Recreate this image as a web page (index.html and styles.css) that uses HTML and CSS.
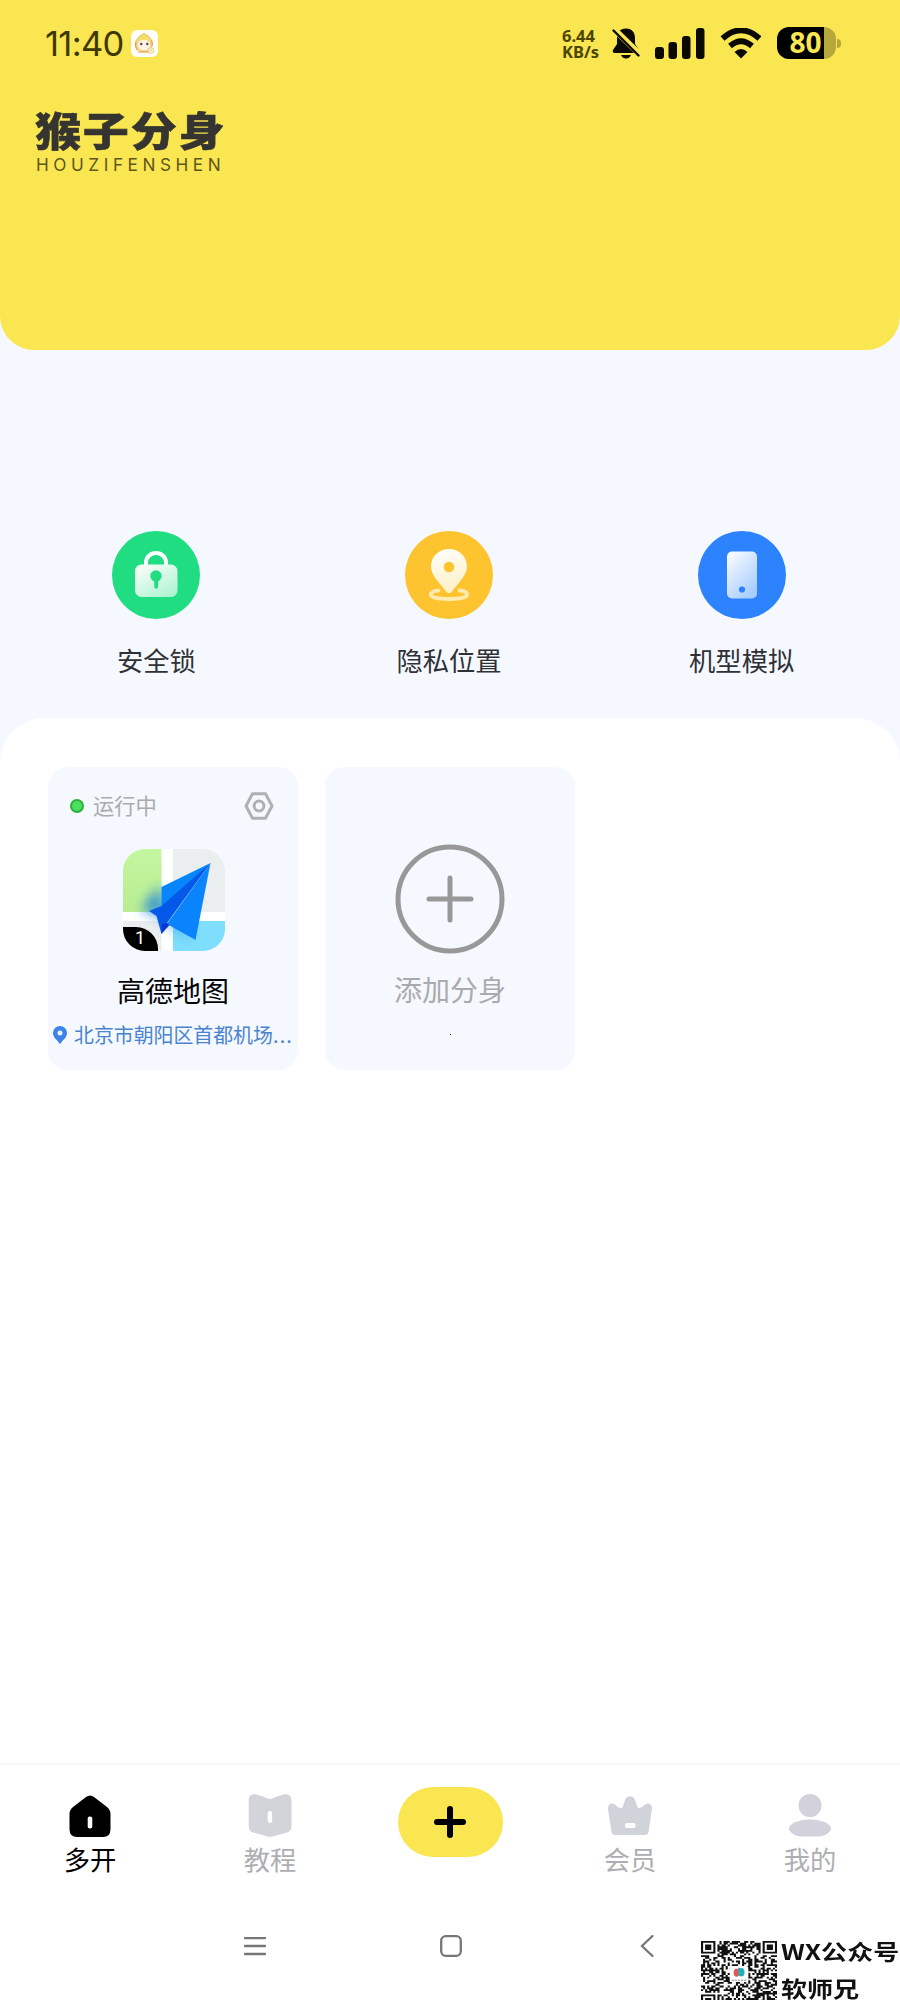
FILE: index.html
```html
<!DOCTYPE html>
<html lang="zh-CN">
<head>
<meta charset="utf-8">
<title>猴子分身</title>
<link rel="stylesheet" href="styles.css">
</head>
<body>
<div class="screen">
  <header class="hero">
    <div class="status">
      <span class="time">11:40</span>
      <svg class="avatar" viewBox="0 0 27 27" width="27" height="27">
        <rect width="27" height="27" rx="6" fill="#fffefa"/>
        <circle cx="13" cy="14" r="8.6" fill="#f7d283"/>
        <path d="M5 11Q8 5 13 3.500Q18 5 21 11" fill="#f2df70" stroke="#e9b953" stroke-width=".8"/>
        <ellipse cx="13" cy="15" rx="6.300" ry="5.200" fill="#fff3e9"/>
        <path d="M5 11.500Q3.500 16 6.500 20.500M20.500 10.500Q22 13 21 16M7 22H18" fill="none" stroke="#e59a4b" stroke-width="1.200"/>
        <circle cx="10.300" cy="14" r="1.200" fill="#4c433e"/><circle cx="16.300" cy="14" r="1.200" fill="#4c433e"/>
        <circle cx="20" cy="20.500" r="2.800" fill="#fff9e0" stroke="#e3bd62" stroke-width=".8"/>
        <circle cx="20" cy="20" r=".6" fill="#a65"/>
      </svg>
      <div class="speed"><span>6.44</span><span>KB/s</span></div>
      <svg class="bell" viewBox="0 0 28 31" width="28" height="31">
        <path d="M14 .5C7.500.5 5 5 5 10V16L1 22Q0 25 3 25H25Q28 25 27 22L23 16V10C23 5 20.500.5 14 .5ZM9 27H19Q17.500 30.500 14 30.500T9 27Z" fill="#0a0900"/>
        <path d="M2 1L27.500 26" stroke="#fae650" stroke-width="6"/>
        <path d="M1.500 2.500L26.500 27.500" stroke="#0a0900" stroke-width="2.400" stroke-linecap="round"/>
      </svg>
      <svg class="signal" viewBox="0 0 50 31" width="50" height="31" fill="#0a0900">
        <rect x="0" y="19" width="9" height="12" rx="3"/><rect x="13.500" y="14" width="8.500" height="17" rx="3"/><rect x="27" y="8" width="8.500" height="23" rx="3"/><rect x="41" y="0" width="8.500" height="31" rx="3"/>
      </svg>
      <svg class="wifi" viewBox="0 0 42 31" width="42" height="31">
        <path d="M2.500 10.500Q21-6 39.500 10.500M10 18Q21 8.500 32 18" fill="none" stroke="#0a0900" stroke-width="5.800"/>
        <path d="M14.500 24Q21 18 27.500 24L21 30.500Z" fill="#0a0900"/>
      </svg>
      <div class="battery"><span>80</span></div>
      <i class="battery-tip"></i>
    </div>
    <div class="brand">
      <div class="brand-cn">猴子分身</div>
      <div class="brand-en">HOUZIFENSHEN</div>
    </div>
  </header>

  <section class="features">
    <div class="feature">
      <svg viewBox="0 0 88 88" width="88" height="88">
        <defs><linearGradient id="lockFill" x1="0" y1="0" x2=".7" y2="1"><stop offset="0" stop-color="#fff"/><stop offset="1" stop-color="#b2f3d2"/></linearGradient></defs>
        <circle cx="44" cy="44" r="44" fill="#21dd82"/>
        <path d="M34 36V31.500a10 9.500 0 0 1 20 0V36" fill="none" stroke="#fbfffd" stroke-width="4"/>
        <rect x="23" y="33.500" width="42.500" height="32.500" rx="6.500" fill="url(#lockFill)"/>
        <circle cx="44" cy="45" r="5.700" fill="#21dd82"/>
        <path d="M42 47h4.500l-.5 9a1.800 1.800 0 0 1-3.600 0Z" fill="#21dd82"/>
      </svg>
      <span>安全锁</span>
    </div>
    <div class="feature">
      <svg viewBox="0 0 88 88" width="88" height="88">
        <defs><linearGradient id="pinFill" x1="0" y1="0" x2=".3" y2="1"><stop offset="0" stop-color="#fff"/><stop offset="1" stop-color="#fff1c8"/></linearGradient></defs>
        <circle cx="44" cy="44" r="44" fill="#fdc42f"/>
        <path d="M33.500 59.500C28 60 25.800 61.500 25.800 63.500C25.800 66.500 33 68 44 68S62.200 66.500 62.200 63.500C62.200 61.500 60 60 54.500 59.500" fill="none" stroke="#ffebaf" stroke-width="3.800" stroke-linecap="round"/>
        <path d="M44 18C34 18 26 25.500 26 35.500C26 44 34 51 41 60.500Q44 64 47 60.500C54 51 62 44 62 35.500C62 25.500 54 18 44 18Z" fill="url(#pinFill)"/>
        <circle cx="44" cy="36" r="5.300" fill="#fdc42f"/>
      </svg>
      <span>隐私位置</span>
    </div>
    <div class="feature">
      <svg viewBox="0 0 88 88" width="88" height="88">
        <defs><linearGradient id="phoneFill" x1="0" y1="0" x2=".7" y2="1"><stop offset="0" stop-color="#fff"/><stop offset="1" stop-color="#a8ccff"/></linearGradient></defs>
        <circle cx="44" cy="44" r="44" fill="#2d82fe"/>
        <rect x="29" y="20.500" width="30" height="47" rx="5" fill="url(#phoneFill)"/>
        <circle cx="44" cy="58.500" r="3.100" fill="#2d82fe"/>
      </svg>
      <span>机型模拟</span>
    </div>
  </section>

  <main class="panel">
    <article class="card">
      <div class="card-head">
        <i class="dot"></i><span class="state">运行中</span>
        <svg viewBox="0 0 30 28" width="30" height="28" fill="none" stroke="#aeb0b4">
          <path d="M8.500 1.800H21.500L28 14L21.500 26.200H8.500L2 14Z" stroke-width="3" stroke-linejoin="round"/>
          <circle cx="15" cy="14" r="4.900" stroke-width="3"/>
        </svg>
      </div>
      <div class="app">
        <svg viewBox="0 0 102 102" width="102" height="102">
          <defs>
            <clipPath id="tile"><rect width="102" height="102" rx="22"/></clipPath>
            <linearGradient id="park" x1="0" y1="0" x2="0" y2="1"><stop offset="0" stop-color="#c4f5a0"/><stop offset="1" stop-color="#b9ed91"/></linearGradient>
            <filter id="soft" x="-50%" y="-50%" width="200%" height="200%"><feGaussianBlur stdDeviation="6"/></filter>
          </defs>
          <g clip-path="url(#tile)">
            <rect width="102" height="102" fill="#fff"/>
            <rect width="38.500" height="63" fill="url(#park)"/>
            <rect x="50" width="52" height="63" fill="#ebeeef"/>
            <rect y="72" width="38.500" height="30" fill="#ebeeef"/>
            <rect x="50" y="72" width="52" height="30" fill="#7fdefb"/>
            <path d="M39 46L22 60L37 70L42 76L70 92L50 65Z" fill="#2c86ed" opacity=".5" filter="url(#soft)"/>
            <path d="M38.500 36V63H20Q20 52 38.500 36Z" fill="#2789d8" opacity=".75" filter="url(#soft)"/>
          </g>
          <path d="M87.500 14L38.500 38V61L30 63L34.500 66.500Z" fill="#0785fb"/>
          <path d="M87.500 14L38.500 57L26 62L33.500 67L38.500 85L44 74Z" fill="#0459e9"/>
          <path d="M87.500 14L44 75L72.500 91Z" fill="#0a84fd"/>
          <path d="M39 75L38.500 85L46.500 76L44 74Z" fill="#0838d4"/>
        </svg>
        <b class="count">1</b>
      </div>
      <div class="name">高德地图</div>
      <div class="place">
        <svg viewBox="0 0 14 18" width="14" height="18"><path d="M7 0A7 7 0 0 0 0 7C0 11.500 4 13.500 6 17Q7 18.500 8 17C10 13.500 14 11.500 14 7A7 7 0 0 0 7 0Z" fill="#3c82e8"/><circle cx="7" cy="7" r="2.500" fill="#e8f1ff"/></svg>
        <span>北京市朝阳区首都机场<span class="ellipsis">...</span></span>
      </div>
    </article>
    <article class="card">
      <svg class="add" viewBox="0 0 110 110" width="110" height="110" fill="none" stroke="#989898" stroke-width="5" stroke-linecap="round"><circle cx="55" cy="55" r="52"/><path d="M55 34V76M34 55H76"/></svg>
      <div class="name muted">添加分身</div>
      <i class="speck"></i>
    </article>
  </main>

  <footer class="bottom">
    <nav class="tabs">
      <div class="tab active">
        <svg viewBox="0 0 44 44" width="44" height="44"><path d="M18 3Q22-.2 26 3L39 13Q42.500 16 42.500 20V35Q42.500 43 35 43H9Q1.500 43 1.500 35V20Q1.500 16 5 13Z" fill="#000"/><rect x="19.700" y="22.500" width="4.600" height="12" rx="2" fill="#fff"/></svg>
        <span>多开</span>
      </div>
      <div class="tab">
        <svg viewBox="0 0 44 44" width="44" height="44"><path d="M.7 7C.7 1 4.500-.5 9 .8Q15 2 18.500 4Q22 6 25.500 4Q29 2 35 .8C39.500-.5 43.500 1 43.500 7V32Q43.500 37 39 38.500Q33 40 25.500 42.300Q22 43.300 18.500 42.300Q11 40 5 38.500Q.7 37 .7 32Z" fill="#d3d4da"/><rect x="19.700" y="17" width="4.400" height="12" rx="2" fill="#fff"/></svg>
        <span>教程</span>
      </div>
      <div class="tab plus">
        <svg viewBox="0 0 32 32" width="32" height="32"><path d="M16 3V29M3 16H29" stroke="#000" stroke-width="6" stroke-linecap="round"/></svg>
      </div>
      <div class="tab">
        <svg viewBox="0 0 44 44" width="44" height="44"><path d="M0 15C-.5 9 5.500 7.500 8.500 12L12 14Q14 15 15 12L17 6C18.500 1 25.500 1 27 6L29 12Q30 15 32 14L35.500 12C38.500 7.500 44.500 9 44 15L40.500 38Q40 41 37 41H7Q4 41 3.500 38Z" fill="#d1d3da"/><rect x="17" y="29" width="10.500" height="5" rx="1.800" fill="#fff"/></svg>
        <span>会员</span>
      </div>
      <div class="tab">
        <svg viewBox="0 0 44 44" width="44" height="44" fill="#d3d2dc"><circle cx="22" cy="11.500" r="11.500"/><path d="M22 25.500C34 25.500 43 30 43 34.500C43 38 37 42.500 31 42.500H13C7 42.500 1 38 1 34.500C1 30 10 25.500 22 25.500Z"/></svg>
        <span>我的</span>
      </div>
    </nav>
    <div class="system">
      <svg class="sys-menu" viewBox="0 0 22 22" width="22" height="22"><path d="M1 1H21M1 9H21M1 17H21"/></svg>
      <svg class="sys-home" viewBox="0 0 22 22" width="22" height="22"><rect x="1.200" y="1.200" width="19.600" height="19.600" rx="4.500"/></svg>
      <svg class="sys-back" viewBox="0 0 14 22" width="14" height="22"><path d="M12.500 1L2 11L12.500 21"/></svg>
    </div>
    <div class="credit">
      <svg class="qr" viewBox="0 0 37 37" width="76" height="66" preserveAspectRatio="none">
        <path id="modules" fill="#111"/>
        <rect x="14" y="14" width="9" height="9" rx="1" fill="#fff"/>
        <ellipse cx="17.300" cy="17.800" rx="1.400" ry="2.200" fill="#e5574e"/>
        <ellipse cx="19.600" cy="17.500" rx="1.600" ry="2.400" fill="#25aeb4"/>
        <path d="M18.500 15V16" stroke="#3d7ff0" stroke-width=".8"/>
        <path d="M15 22H22" stroke="#888" stroke-width=".6" stroke-dasharray="1 .5"/>
      </svg>
      <div class="credit-text"><span>WX公众号</span><span>软师兄</span></div>
    </div>
  </footer>
</div>
<script src="qr.js"></script>
</body>
</html>
```
FILE: styles.css
```css
* { box-sizing: border-box; }
body {
  margin: 0;
  background: #fff;
  font-family: "Noto Sans CJK SC", sans-serif;
}
svg { display: block; flex: none; }
.screen {
  width: 900px;
  height: 2000px;
  display: flex;
  flex-direction: column;
  background: #f5f9ff;
  overflow: hidden;
}
.hero {
  height: 350px;
  flex: none;
  background: #fae650;
  border-radius: 0 0 34px 34px;
}
.status {
  height: 86px;
  display: flex;
  align-items: center;
  padding-left: 45px;
  color: #0a0900;
}
.time {
  width: 86px;
  padding-top: 1px;
  font: 400 34.500px/40px Inter, sans-serif;
  letter-spacing: -.7px;
  color: #3e3800;
  white-space: nowrap;
}
.speed {
  width: 50px;
  margin-left: 404px;
  display: flex;
  flex-direction: column;
  padding-top: 2px;
  font: 700 16.500px/16px "Noto Sans", sans-serif;
  color: #4c4500;
}
.signal { margin-left: 15px; }
.wifi { margin-left: 15px; }
.battery {
  width: 59px;
  height: 32px;
  margin-left: 15px;
  padding-right: 2px;
  border-radius: 12px;
  background: linear-gradient(to right, #000 47px, #b5a73a 47px);
  text-align: center;
  font: 700 28px/31px "Noto Sans", sans-serif;
  color: #fae650;
}
.battery-tip {
  width: 4px;
  height: 9px;
  margin-left: 1px;
  border-radius: 0 5px 5px 0;
  background: #b5a73a;
}
.brand { padding: 20px 0 0 35px; color: #353431; }
.brand-cn {
  width: 200px;
  font-size: 40px;
  font-weight: 900;
  line-height: 47px;
  letter-spacing: 1.600px;
  white-space: nowrap;
  transform: scaleX(1.150);
  transform-origin: left;
  -webkit-text-stroke: .6px #353431;
}
.brand-en {
  margin: 2px 0 0 1px;
  font: 400 17.200px/20px Inter, sans-serif;
  letter-spacing: 4.550px;
  color: #5e5620;
}

.features {
  height: 368px;
  flex: none;
  display: grid;
  grid-template-columns: repeat(3, 1fr);
  padding: 181px 12px 0 10px;
}
.feature {
  display: flex;
  flex-direction: column;
  align-items: center;
  gap: 21px;
  color: #303136;
  font-size: 26.300px;
  line-height: 40px;
}

.panel {
  flex: 1;
  display: flex;
  align-items: flex-start;
  gap: 27px;
  padding: 49px 48px 0;
  background: #fff;
  border-radius: 45px 45px 0 0;
}
.card {
  width: 250px;
  height: 303px;
  display: flex;
  flex-direction: column;
  align-items: center;
  background: #f5f8fe;
  border-radius: 20px;
}
.card-head {
  width: 100%;
  height: 38px;
  margin-top: 20px;
  padding: 0 24px 0 22px;
  display: flex;
  align-items: center;
}
.dot {
  width: 14px;
  height: 14px;
  border-radius: 50%;
  border: 2px solid #2daf3e;
  background: #4be05c;
}
.state {
  flex: 1;
  margin-left: 9px;
  padding-bottom: 2px;
  font-size: 21.300px;
  line-height: 30px;
  color: #aaabae;
}
.app { position: relative; margin: 24px 0 0 1px; }
.count {
  position: absolute;
  left: 0;
  bottom: 0;
  width: 35px;
  height: 24px;
  border-radius: 0 22px 0 22px;
  background: #000;
  color: #fff;
  font: 400 18px/22px Roboto, sans-serif;
  text-align: center;
}
.name {
  margin-top: 19px;
  font-size: 28px;
  line-height: 40px;
  color: #050505;
}
.muted { color: #a9aaad; margin-top: 15px; }
.place {
  display: flex;
  align-items: center;
  gap: 7px;
  width: 100%;
  margin-top: 10px;
  padding-left: 5px;
  color: #4a84cf;
  font-size: 19.900px;
  line-height: 30px;
  white-space: nowrap;
}
.ellipsis { letter-spacing: 1.200px; }
.add { margin-top: 77px; }
.speck { width: 1px; height: 1px; margin-top: 25px; background: #333; }

.bottom {
  position: relative;
  height: 237px;
  flex: none;
  background: #fff;
  border-top: 2px solid #f6f6f7;
}
.tabs {
  height: 131px;
  display: grid;
  grid-template-columns: repeat(5, 1fr);
}
.tab {
  padding-top: 29px;
  display: flex;
  flex-direction: column;
  align-items: center;
  gap: 1px;
  color: #adaeb2;
  font-size: 26.300px;
  line-height: 40px;
}
.active { color: #000; }
.plus {
  justify-self: center;
  width: 105px;
  height: 70px;
  margin-top: 22px;
  padding-top: 19px;
  border-radius: 36px;
  background: #fae650;
}
.system {
  display: flex;
  padding: 39px 0 0 244px;
  fill: none;
  stroke: #777;
  stroke-width: 2.300;
  stroke-linecap: round;
}
.sys-menu { margin-top: 2px; }
.sys-home { margin-left: 174px; }
.sys-back { margin-left: 178px; }
/* Attribution stamp overlapping the system bar */
.credit {
  position: absolute;
  left: 701px;
  top: 176px;
  width: 199px;
  height: 59px;
  display: flex;
  overflow: hidden;
}
.credit-text {
  margin: -9px 0 0 4px;
  display: flex;
  flex-direction: column;
  transform: scaleX(1.210);
  transform-origin: left;
  font-size: 21.500px;
  font-weight: 700;
  line-height: 37px;
  color: #111;
  white-space: nowrap;
}
```
FILE: qr.js
```js
const size = 37;
let seed = 20417;
function random() {
  seed = (seed * 1103515245 + 12345) % 2147483648;
  return seed / 2147483648;
}
// Finder squares sit in three corners, each with a one-module quiet ring.
function finder(x, y) {
  for (const [fx, fy] of [[0, 0], [size - 7, 0], [0, size - 7]]) {
    const dx = Math.abs(x - fx - 3);
    const dy = Math.abs(y - fy - 3);
    const ring = Math.max(dx, dy);
    if (ring <= 4) return ring === 3 || ring <= 1 ? 1 : 0;
  }
  return -1;
}
let d = "";
for (let y = 0; y < size; y++) {
  for (let x = 0; x < size; x++) {
    const f = finder(x, y);
    const on = f < 0 ? random() < 0.52 : f === 1;
    if (on) d += `M${x} ${y}h1.02v1.02h-1.02z`;
  }
}
document.getElementById("modules").setAttribute("d", d);
```
